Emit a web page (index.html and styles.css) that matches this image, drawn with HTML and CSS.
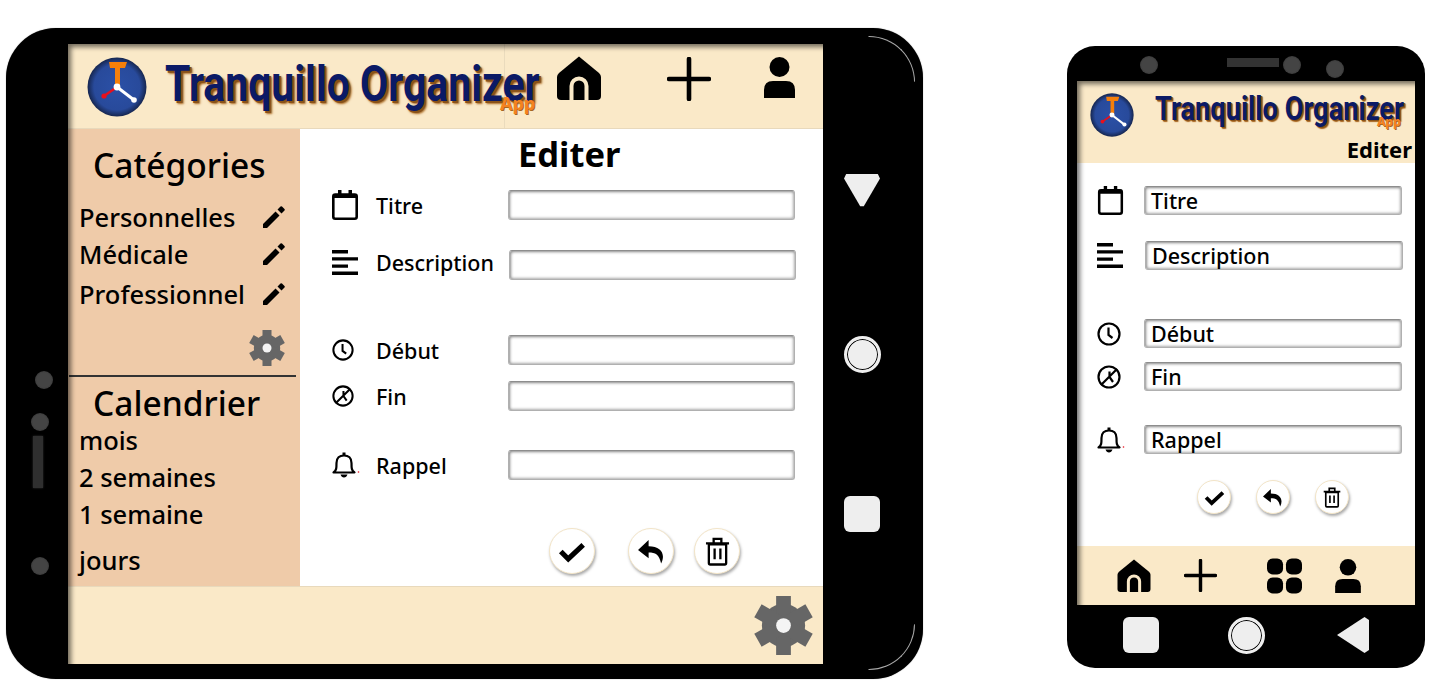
FILE: index.html
```html
<!DOCTYPE html>
<html lang="fr">
<head>
<meta charset="utf-8">
<title>Tranquillo Organizer</title>
<link rel="stylesheet" href="styles.css">
</head>
<body>
<svg class="defs" width="0" height="0" aria-hidden="true">
  <symbol id="i-logo" viewBox="0 0 60 60">
    <defs><radialGradient id="lg"><stop offset="0" stop-color="#2b50a6"/><stop offset=".78" stop-color="#284a9b"/><stop offset="1" stop-color="#16264f"/></radialGradient></defs>
    <circle cx="30" cy="30" r="29.5" fill="url(#lg)"/>
    <path d="M22 5H40L38 11H33V30H28V11H23Z" fill="#f57f0a"/>
    <path d="M30 30L47 43" stroke="#fff" stroke-width="3"/>
    <path d="M30 30L17 39" stroke="#e8101c" stroke-width="2.4"/>
    <circle cx="30" cy="30" r="3.4" fill="#fff"/><circle cx="47" cy="43" r="2.8" fill="#fff"/><circle cx="17" cy="39" r="2.6" fill="#e8101c"/>
  </symbol>
  <symbol id="i-home" viewBox="0 0 44 44">
    <path d="M22 0.5L42 17Q44 18.800 44 21V40Q44 44 40 44H4Q0 44 0 40V21Q0 18.800 2 17Z"/>
    <path d="M14.500 44V30A7.500 7.500 0 0 1 29.500 30V44" fill="none" stroke="#fae9c8" stroke-width="4"/>
  </symbol>
  <symbol id="i-plus" viewBox="0 0 44 44"><path d="M22 2V42M2 22H42" stroke="#000" stroke-width="4.600" stroke-linecap="round" fill="none"/></symbol>
  <symbol id="i-user" viewBox="0 0 31 41">
    <circle cx="15.500" cy="10" r="10"/><path d="M0 41V33Q0 24 9 24H22Q31 24 31 33V41Z"/>
  </symbol>
  <symbol id="i-grid" viewBox="0 0 36 36">
    <rect width="16.500" height="16.500" rx="6"/><rect x="19.500" width="16.500" height="16.500" rx="6"/><rect y="19.500" width="16.500" height="16.500" rx="6"/><rect x="19.500" y="19.500" width="16.500" height="16.500" rx="6"/>
  </symbol>
  <symbol id="i-cal" viewBox="0 0 26 30">
    <rect x="1.300" y="4.500" width="23.400" height="24.200" rx="2" fill="none" stroke="#000" stroke-width="2.600"/>
    <path d="M1 4H25V8H1ZM6 0H9.500V5H6ZM16.500 0H20V5H16.500Z"/>
  </symbol>
  <symbol id="i-lines" viewBox="0 0 26 25">
    <path d="M0 0H16V3.400H0ZM0 7.200H26V10.600H0ZM0 14.400H16V17.800H0ZM0 21.600H26V25H0Z"/>
  </symbol>
  <symbol id="i-clock" viewBox="0 0 24 24">
    <circle cx="12" cy="12" r="10.500" fill="none" stroke="#000" stroke-width="2.200"/>
    <path d="M11.500 5.500V13L15.500 16" fill="none" stroke="#000" stroke-width="2.200"/>
  </symbol>
  <symbol id="i-clockoff" viewBox="0 0 24 24">
    <circle cx="12" cy="12" r="10.500" fill="none" stroke="#000" stroke-width="2.200"/>
    <path d="M4 20L20 4M12.500 6.500V12L16 17" fill="none" stroke="#000" stroke-width="2.200"/>
  </symbol>
  <symbol id="i-bell" viewBox="0 0 28 26">
    <path d="M1.500 20.500C4.500 18.500 4.500 16 4.500 11C4.500 6 7.500 3.500 12 3.500C16.500 3.500 19.500 6 19.500 11C19.500 16 19.500 18.500 22.500 20.500Z" fill="none" stroke="#000" stroke-width="2.200" stroke-linejoin="round"/>
    <path d="M10.500 0.500H13.500V4H10.500ZM8.500 22.500H15.500Q14.500 25.500 12 25.500Q9.500 25.500 8.500 22.500Z"/>
    <circle cx="26.500" cy="20" r=".8" fill="#e8101c"/>
  </symbol>
  <symbol id="i-pen" viewBox="0 0 24 24">
    <path d="M1 19L1 23 5 23 17.500 10.500 13.500 6.500ZM22.500 5.500A1.100 1.100 0 0 0 22.500 4L20 1.500A1.100 1.100 0 0 0 18.500 1.500L15.500 4.500 19.500 8.500Z"/>
  </symbol>
  <symbol id="i-gear" viewBox="0 0 60 60">
    <g fill="#666"><circle cx="30" cy="30" r="22"/>
      <rect x="22.500" width="15" height="60"/>
      <rect x="22.500" width="15" height="60" transform="rotate(60 30 30)"/>
      <rect x="22.500" width="15" height="60" transform="rotate(120 30 30)"/></g>
    <circle cx="30" cy="30" r="7.500" fill="#f4f4f4"/>
  </symbol>
  <symbol id="i-check" viewBox="0 0 30 24"><path d="M3 12L11 20L27 5" fill="none" stroke="#000" stroke-width="5.500"/></symbol>
  <symbol id="i-undo" viewBox="0 0 28 26"><path d="M11 7.500V1L0 11.500 11 20V14C18 14 22 16 24 25.500 29 16 24 7.500 11 7.500Z"/></symbol>
  <symbol id="i-trash" viewBox="0 0 26 30">
    <path d="M4 7.500H22V27Q22 28.500 20.500 28.500H5.500Q4 28.500 4 27ZM1 6.500H25M9 6V1.800H17V6M10 12V23M16 12V23" fill="none" stroke="#000" stroke-width="2.400"/>
  </symbol>
</svg>

<main class="canvas">
  <section class="tablet">
    <i class="arc arc-top"></i>
    <i class="arc arc-bottom"></i>
    <div class="t-left">
      <span class="dot dot-a"></span>
      <span class="dot dot-b"></span>
      <span class="pill"></span>
      <span class="dot dot-c"></span>
    </div>
    <div class="t-screen">
      <header class="t-head">
        <svg class="t-logo"><use href="#i-logo"/></svg>
        <div class="brand t-brand"><span class="brand-name">Tranquillo Organizer</span><span class="brand-app">App</span></div>
        <svg class="t-home"><use href="#i-home"/></svg>
        <svg class="t-plus"><use href="#i-plus"/></svg>
        <svg class="t-user"><use href="#i-user"/></svg>
      </header>
      <div class="t-body">
        <aside class="side">
          <h2 class="side-title side-title-a">Catégories</h2>
          <div class="side-row row-a"><span>Personnelles</span><svg class="pen"><use href="#i-pen"/></svg></div>
          <div class="side-row row-b"><span>Médicale</span><svg class="pen"><use href="#i-pen"/></svg></div>
          <div class="side-row row-c"><span>Professionnel</span><svg class="pen"><use href="#i-pen"/></svg></div>
          <svg class="side-gear"><use href="#i-gear"/></svg>
          <hr class="side-rule">
          <h2 class="side-title side-title-b">Calendrier</h2>
          <div class="side-row cal-row">mois</div>
          <div class="side-row cal-row">2 semaines</div>
          <div class="side-row cal-row">1 semaine</div>
          <div class="side-row cal-last">jours</div>
        </aside>
        <div class="t-main">
          <h1 class="t-title">Editer</h1>
          <div class="t-row"><svg class="t-ico ico-cal"><use href="#i-cal"/></svg><label class="t-label">Titre</label><div class="field"></div></div>
          <div class="t-row t-desc"><svg class="t-ico ico-lines"><use href="#i-lines"/></svg><label class="t-label">Description</label><div class="field"></div></div>
          <div class="t-row t-start"><svg class="t-ico ico-clock"><use href="#i-clock"/></svg><label class="t-label">Début</label><div class="field"></div></div>
          <div class="t-row t-end"><svg class="t-ico ico-clock"><use href="#i-clockoff"/></svg><label class="t-label">Fin</label><div class="field"></div></div>
          <div class="t-row t-bell"><svg class="t-ico ico-bell"><use href="#i-bell"/></svg><label class="t-label">Rappel</label><div class="field"></div></div>
          <div class="t-actions">
            <button class="round"><svg class="a-check"><use href="#i-check"/></svg></button>
            <button class="round t-undo"><svg class="a-undo"><use href="#i-undo"/></svg></button>
            <button class="round t-trash"><svg class="a-trash"><use href="#i-trash"/></svg></button>
          </div>
        </div>
      </div>
      <footer class="t-foot"><svg class="t-foot-gear"><use href="#i-gear"/></svg></footer>
    </div>
    <div class="t-right">
      <span class="key-tri-down"></span>
      <span class="key-circle"></span>
      <span class="key-square"></span>
    </div>
  </section>

  <section class="phone">
    <div class="p-top">
      <span class="cam cam-a"></span>
      <span class="speaker"></span>
      <span class="cam cam-b"></span>
      <span class="cam cam-c"></span>
    </div>
    <div class="p-screen">
      <header class="p-head">
        <div class="p-head-row">
          <svg class="p-logo"><use href="#i-logo"/></svg>
          <div class="brand p-brand"><span class="brand-name">Tranquillo Organizer</span><span class="brand-app">App</span></div>
        </div>
        <h1 class="p-title">Editer</h1>
      </header>
      <div class="p-main">
        <div class="p-row"><svg class="p-ico p-cal"><use href="#i-cal"/></svg><div class="field p-field">Titre</div></div>
        <div class="p-row p-desc"><svg class="p-ico p-lines"><use href="#i-lines"/></svg><div class="field p-field">Description</div></div>
        <div class="p-row p-start"><svg class="p-ico p-clock"><use href="#i-clock"/></svg><div class="field p-field">Début</div></div>
        <div class="p-row p-end"><svg class="p-ico p-clock"><use href="#i-clockoff"/></svg><div class="field p-field">Fin</div></div>
        <div class="p-row p-bellrow"><svg class="p-ico p-bell"><use href="#i-bell"/></svg><div class="field p-field">Rappel</div></div>
        <div class="p-actions">
          <button class="round small"><svg class="s-check"><use href="#i-check"/></svg></button>
          <button class="round small"><svg class="s-undo"><use href="#i-undo"/></svg></button>
          <button class="round small"><svg class="s-trash"><use href="#i-trash"/></svg></button>
        </div>
      </div>
      <footer class="p-foot">
        <svg class="pf-home"><use href="#i-home"/></svg>
        <svg class="pf-plus"><use href="#i-plus"/></svg>
        <svg class="pf-grid"><use href="#i-grid"/></svg>
        <svg class="pf-user"><use href="#i-user"/></svg>
      </footer>
    </div>
    <div class="p-bottom">
      <span class="key-square"></span>
      <span class="key-circle"></span>
      <span class="key-tri-left"></span>
    </div>
  </section>
</main>
</body>
</html>
```
FILE: styles.css
```css
* { box-sizing: border-box; }
html, body { margin: 0; padding: 0; background: #fff; }
body { font-family: "Noto Sans", "Open Sans", sans-serif; font-weight: 500; color: #000; overflow: hidden; }
.defs { position: absolute; }
svg { display: block; flex: none; }
.canvas { position: relative; width: 1447px; height: 692px; overflow: hidden; }

/* Tablet */
.tablet { position: absolute; left: 6px; top: 28px; width: 917px; height: 651px; background: #000; border-radius: 50px; display: flex; padding: 16px 0 15px; box-shadow: 0 0 1px #777; }
.arc { position: absolute; width: 47px; height: 46px; border: 1px solid transparent; }
.arc-top { left: 862px; top: 8px; border-top-color: #aaa; border-right-color: #aaa; border-top-right-radius: 47px; }
.arc-bottom { left: 862px; top: 596px; border-bottom-color: #aaa; border-right-color: #aaa; border-bottom-right-radius: 47px; }
.t-left { width: 62px; flex: none; display: flex; flex-direction: column; align-items: flex-start; }
.dot { width: 18px; height: 18px; border-radius: 50%; background: radial-gradient(circle, #444 55%, #2c2c2c); }
.dot-a { margin: 327px 0 0 29px; }
.dot-b { margin: 24px 0 0 25px; }
.pill { width: 10px; height: 52px; margin: 5px 0 0 27px; background: #2f2f2f; box-shadow: 0 0 2px #2f2f2f; }
.dot-c { margin: 69px 0 0 25px; }
.t-screen { position: relative; width: 755px; flex: none; display: flex; flex-direction: column; }
.t-screen::after, .p-screen::after { content: ""; position: absolute; inset: 0; pointer-events: none; box-shadow: inset 4px 4px 5px -1px rgba(0,0,0,.55); }
.t-head { height: 85px; flex: none; background: #fae9c8; border-bottom: 1px solid #e8d9bc; display: flex; align-items: center; position: relative; }
.t-head::before { content: ""; position: absolute; left: 436px; top: 0; bottom: 0; width: 1px; background: #eadbbd; }
.t-logo { width: 60px; height: 60px; margin-left: 19px; position: relative; top: 1px; }
.brand { position: relative; white-space: nowrap; font-family: "Roboto", sans-serif; font-weight: 700; }
.brand-name { display: block; color: #0b1a66; transform-origin: 0 50%; }
.brand-app { position: absolute; color: #f58220; font-family: "Noto Sans", sans-serif; }
.t-brand { margin-left: 18px; width: 376px; font-size: 42px; line-height: 48px; position: relative; top: -2px; }
.t-brand .brand-name { transform: scale(.975, 1.18); text-shadow: 2px 2px 0 #8a5218, 3px 3px 2px #a8661f; }
.t-brand .brand-app { left: 335px; top: 32px; font-size: 18px; line-height: 22px; text-shadow: 1px 1px 0 #a8661f; }
.t-home { width: 44px; height: 44px; margin-left: 16px; position: relative; top: -8px; }
.t-plus { width: 44px; height: 44px; margin-left: 66px; position: relative; top: -7px; }
.t-user { width: 31px; height: 41px; margin-left: 53px; position: relative; top: -9px; }
.t-body { height: 457px; flex: none; display: flex; }
.side { width: 232px; flex: none; background: #efcba9; display: flex; flex-direction: column; }
.side-title { margin: 0; font-weight: 500; font-size: 33.500px; line-height: 44px; }
.side-title-a { padding: 14px 0 0 25px; height: 59px; }
.side-title-b { padding-left: 25px; height: 40px; margin-top: 4px; }
.side-row { display: flex; align-items: center; font-size: 25.500px; height: 37px; padding-left: 11px; }
.side-row span { flex: 1; }
.row-a { margin-top: 10px; }
.row-c { margin-top: 3px; }
.pen { width: 24px; height: 24px; margin-right: 14px; }
.side-gear { width: 36px; height: 36px; margin: 18px 0 0 181px; }
.side-rule { margin: 9px 4px 0 1px; border: 0; height: 2px; background: #333; }
.cal-last { margin-top: 9px; }
.t-main { flex: 1; background: #fff; padding-left: 32px; display: flex; flex-direction: column; }
.t-title { margin: 0; height: 61px; padding: 3px 0 0 186px; font-size: 34.500px; line-height: 44px; font-weight: 700; }
.t-row { display: flex; align-items: center; height: 30px; }
.t-ico { width: 26px; height: 30px; margin-right: 18px; }
.ico-lines { height: 25px; margin-bottom: 6px; }
.ico-clock { width: 22px; height: 22px; margin: 0 22px 0 0; }
.ico-bell { width: 28px; height: 26px; margin: 0 16px 0 0; }
.t-label { font-size: 21.500px; width: 132px; flex: none; line-height: 30px; padding-top: 1px; }
.t-desc { margin-top: 30px; }
.t-desc .t-label { width: 133px; margin-bottom: 5px; padding-top: 0; }
.t-start { margin-top: 55px; }
.t-end { margin-top: 16px; }
.t-bell { margin-top: 39px; }
.field { width: 287px; height: 30px; flex: none; background: #fff; border-radius: 3px; border: 1px solid #b0b0b0; border-top-color: #8d8d8d; box-shadow: inset 1px 1px 3px #8a8a8a, inset -1px -1px 3px #b8b8b8; }
.t-actions { display: flex; margin: 48px 0 0 217px; }
.round { width: 46px; height: 46px; padding: 0; display: flex; align-items: center; justify-content: center; background: #fff; border: 1px solid #f3e5c8; border-radius: 50%; box-shadow: 1px 2px 3px #a8a8a8; }
.t-undo { margin-left: 33px; }
.t-trash { margin-left: 20px; }
.a-check { width: 28px; height: 23px; }
.a-undo { width: 27px; height: 25px; }
.a-trash { width: 25px; height: 29px; }
.t-foot { flex: 1; background: #fae9c8; border-top: 1px solid #e8d9bc; display: flex; justify-content: flex-end; align-items: center; padding-right: 10px; }
.t-foot-gear { width: 59px; height: 59px; }
.t-right { flex: 1; display: flex; flex-direction: column; align-items: center; padding: 130px 22px 0 0; }
.key-square { width: 36px; height: 36px; border-radius: 6px; background: #eee; flex: none; }
.key-circle { width: 37px; height: 37px; border-radius: 50%; background: #eee; border: 3px solid #eee; box-shadow: inset 0 0 0 1px #000; flex: none; }
.key-tri-down { width: 36px; height: 33px; background: #eee; flex: none; clip-path: polygon(6% 0, 94% 0, 100% 14%, 55% 98%, 45% 98%, 0 14%); }
.key-tri-left { width: 32px; height: 36px; background: #eee; flex: none; clip-path: polygon(0 50%, 86% 0, 100% 8%, 100% 92%, 86% 100%); }
.t-right .key-circle { margin-top: 129px; }
.t-right .key-square { margin-top: 123px; }

/* Phone */
.phone { position: absolute; left: 1067px; top: 46px; width: 358px; height: 622px; background: #000; border-radius: 28px; display: flex; flex-direction: column; padding: 0 10px; }
.p-top { height: 35px; flex: none; display: flex; align-items: flex-start; }
.cam { width: 18px; height: 18px; border-radius: 50%; background: radial-gradient(circle, #444 55%, #2c2c2c); flex: none; }
.cam-a { margin: 10px 0 0 63px; }
.speaker { width: 52px; height: 9px; background: #333; margin: 12px 0 0 69px; }
.cam-b { margin: 10px 0 0 4px; }
.cam-c { margin: 14px 0 0 25px; }
.p-screen { position: relative; height: 524px; flex: none; display: flex; flex-direction: column; }
.p-head { height: 82px; flex: none; background: #fae9c8; display: flex; flex-direction: column; }
.p-head-row { display: flex; height: 54px; align-items: flex-start; }
.p-logo { width: 44px; height: 44px; margin: 12px 0 0 13px; }
.p-brand { margin: 11px 0 0 21px; width: 250px; font-size: 28px; line-height: 34px; }
.p-brand .brand-name { transform: scale(.972, 1.18); text-shadow: 1.500px 1.500px 0 #8a5218, 2px 2px 1px #a8661f; }
.p-brand .brand-app { left: 222px; top: 22px; font-size: 12px; line-height: 16px; text-shadow: 1px 1px 0 #a8661f; }
.p-title { margin: 0; font-size: 22px; line-height: 28px; font-weight: 700; text-align: right; padding-right: 3px; }
.p-main { flex: 1; background: #fff; padding: 23px 0 0 20px; display: flex; flex-direction: column; }
.p-row { display: flex; align-items: center; height: 29px; }
.p-field { width: 258px; height: 29px; font-size: 21.500px; line-height: 28px; padding-left: 6px; }
.p-ico { margin-right: 20px; }
.p-cal { width: 27px; height: 29px; }
.p-lines { width: 26px; height: 25px; margin-right: 22px; }
.p-clock { width: 24px; height: 24px; margin-right: 23px; }
.p-bell { width: 28px; height: 26px; margin-right: 19px; }
.p-desc { margin-top: 26px; }
.p-start { margin-top: 49px; }
.p-end { margin-top: 14px; }
.p-bellrow { margin-top: 34px; }
.p-actions { display: flex; margin: 26px 0 0 100px; }
.round.small { width: 34px; height: 34px; margin-right: 25px; }
.s-check { width: 21px; height: 17px; }
.s-undo { width: 20px; height: 19px; }
.s-trash { width: 18px; height: 21px; }
.p-foot { height: 59px; flex: none; background: #fae9c8; display: flex; align-items: center; padding-left: 40px; }
.pf-home { width: 34px; height: 33px; }
.pf-plus { width: 33px; height: 33px; margin-left: 33px; }
.pf-grid { width: 35px; height: 36px; margin-left: 50px; }
.pf-user { width: 26px; height: 34px; margin-left: 33px; }
.p-bottom { flex: 1; display: flex; align-items: center; padding: 0 0 3px 46px; }
.p-bottom .key-circle { margin-left: 69px; }
.p-bottom .key-tri-left { margin-left: 72px; }
```
